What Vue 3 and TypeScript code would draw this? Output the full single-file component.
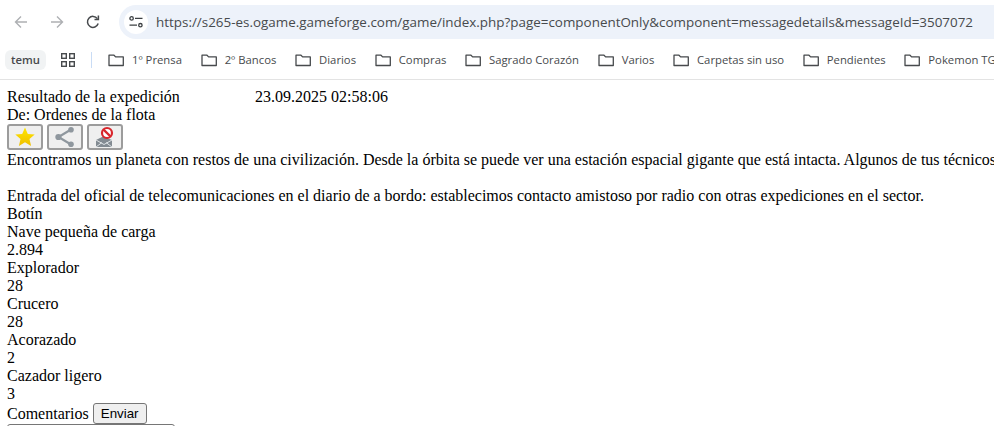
<template>
  <div class="browser">
    <!-- Toolbar -->
    <div class="toolbar">
      <button class="nav" aria-label="Atrás">
        <svg width="16" height="16" viewBox="0 0 16 16" fill="none" stroke="#aeb0b3" stroke-width="1.4">
          <path d="M14 8H2.5M8 2.5 2.5 8 8 13.5" />
        </svg>
      </button>
      <button class="nav" aria-label="Adelante">
        <svg width="16" height="16" viewBox="0 0 16 16" fill="none" stroke="#aeb0b3" stroke-width="1.4">
          <path d="M2 8h11.5M8 2.5 13.5 8 8 13.5" />
        </svg>
      </button>
      <button class="nav" aria-label="Recargar">
        <svg width="16" height="16" viewBox="0 0 16 16" fill="none" stroke="#474a4d" stroke-width="1.5">
          <path d="M13.2 9.6A5.5 5.5 0 1 1 12.4 4.6" />
          <path d="M13.4 1.6v3.9H9.5" />
        </svg>
      </button>
      <div class="omnibox">
        <span class="site-info">
          <svg width="16" height="16" viewBox="0 0 16 16" fill="none" stroke="#3c4043" stroke-width="1.3">
            <circle cx="3.6" cy="4.4" r="1.7" />
            <path d="M7 4.4h7.5M1.5 11.2H9" />
            <circle cx="12.4" cy="11.2" r="1.7" />
          </svg>
        </span>
        <span class="url">https://s265-es.ogame.gameforge.com/game/index.php?page=componentOnly&amp;component=messagedetails&amp;messageId=3507072</span>
      </div>
    </div>

    <!-- Bookmarks bar -->
    <div class="bookmarks">
      <span class="chip">temu</span>
      <svg class="apps" width="14" height="14" viewBox="0 0 14 14" fill="none" stroke="#474a4d" stroke-width="1.4">
        <rect x="0.7" y="0.7" width="4.6" height="4.6" />
        <rect x="8.7" y="0.7" width="4.6" height="4.6" />
        <rect x="0.7" y="8.7" width="4.6" height="4.6" />
        <rect x="8.7" y="8.7" width="4.6" height="4.6" />
      </svg>
      <span class="divider"></span>
      <span v-for="name in folders" :key="name" class="bookmark">
        <svg width="16" height="16" viewBox="0 0 16 16" fill="none" stroke="#474a4d" stroke-width="1.3">
          <path d="M1 3.2h5l1.6 1.7h7.7v8.6H1z" stroke-linejoin="round" />
        </svg>
        {{ name }}
      </span>
    </div>

    <!-- Page content -->
    <main class="page">
      <div class="subject">
        <span class="title">Resultado de la expedición</span>
        <span>23.09.2025 02:58:06</span>
      </div>
      <div>De: Ordenes de la flota</div>
      <div class="actions">
        <button class="action" aria-label="Favorito">
          <svg width="20" height="20" viewBox="0 0 20 20">
            <defs>
              <linearGradient id="gold" x1="0" y1="0" x2="0" y2="1">
                <stop offset="0" stop-color="#ffe600" />
                <stop offset="1" stop-color="#eebf00" />
              </linearGradient>
            </defs>
            <path fill="url(#gold)" d="M10 .5l2.8 6.4 6.9.6-5.2 4.5 1.6 6.9L10 15.3l-6.1 3.6 1.6-6.9L.3 7.5l6.9-.6z" />
          </svg>
        </button>
        <button class="action" aria-label="Compartir">
          <svg width="20" height="20" viewBox="0 0 20 20" fill="#8f979e" stroke="none">
            <path d="M16 2.5 3.5 10 16 17.5" fill="none" stroke="#8f979e" stroke-width="2.2" />
            <circle cx="16" cy="2.8" r="2.8" />
            <circle cx="3.4" cy="10" r="3.1" />
            <circle cx="16" cy="17.2" r="2.8" />
          </svg>
        </button>
        <button class="action" aria-label="Bloquear">
          <svg width="22" height="22" viewBox="0 0 22 22">
            <path d="M2 14 9 10.5l9 3.5V21H2z" fill="#838b92" />
            <path d="M2 14 10 18.5l8-4.5M2 21l6-4.5M18 21l-6-4.5" fill="none" stroke="#dfe3e6" stroke-width="1" />
            <circle cx="13" cy="7" r="5" fill="#fff" stroke="#d8262c" stroke-width="2.2" />
            <path d="M9.6 3.6 16.4 10.4" stroke="#d8262c" stroke-width="2.2" />
          </svg>
        </button>
      </div>
      <div>Encontramos un planeta con restos de una civilización. Desde la órbita se puede ver una estación espacial gigante que está intacta. Algunos de tus técnicos y pilotos se dirigieron a la estación.</div>
      <br />
      <div>Entrada del oficial de telecomunicaciones en el diario de a bordo: establecimos contacto amistoso por radio con otras expediciones en el sector.</div>
      <div>Botín</div>
      <template v-for="item in loot" :key="item.name">
        <div>{{ item.name }}</div>
        <div>{{ item.amount }}</div>
      </template>
      <div class="comments">
        <span>Comentarios</span>
        <button class="send">Enviar</button>
      </div>
      <textarea class="comment-box"></textarea>
    </main>
  </div>
</template>

<script setup lang="ts">
const folders: string[] = [
  "1º Prensa",
  "2º Bancos",
  "Diarios",
  "Compras",
  "Sagrado Corazón",
  "Varios",
  "Carpetas sin uso",
  "Pendientes",
  "Pokemon TGC",
];

const loot: { name: string; amount: string }[] = [
  { name: "Nave pequeña de carga", amount: "2.894" },
  { name: "Explorador", amount: "28" },
  { name: "Crucero", amount: "28" },
  { name: "Acorazado", amount: "2" },
  { name: "Cazador ligero", amount: "3" },
];
</script>

<style>
html,
body {
  margin: 0;
  height: 100%;
  overflow: hidden;
  background: #fff;
}
</style>

<style scoped>
.browser {
  width: 994px;
  height: 426px;
  overflow: hidden;
}

/* ── Toolbar ── */
.toolbar {
  height: 40px;
  display: flex;
  align-items: center;
  padding: 4px 0 0 5px;
  box-sizing: border-box;
  gap: 4px;
}

.nav {
  width: 32px;
  height: 32px;
  flex: none;
  display: flex;
  align-items: center;
  justify-content: center;
  padding: 0;
  border: none;
  background: none;
}

.omnibox {
  flex: 1;
  min-width: 0;
  height: 34px;
  margin-left: 6px;
  padding-left: 5px;
  display: flex;
  align-items: center;
  gap: 8px;
  background: #edf2fa;
  border-radius: 17px 0 0 17px;
}

.site-info {
  width: 24px;
  height: 24px;
  flex: none;
  display: flex;
  align-items: center;
  justify-content: center;
  background: #fff;
  border-radius: 50%;
}

.url {
  font-family: "Open Sans", sans-serif;
  font-size: 13.43px;
  color: #474a4d;
  white-space: nowrap;
}

/* ── Bookmarks ── */
.bookmarks {
  height: 40px;
  box-sizing: border-box;
  display: flex;
  align-items: center;
  padding: 0 0 0 5px;
  border-bottom: 1px solid #e3e3e3;
  font-family: "Open Sans", sans-serif;
  font-size: 11.3px;
  color: #474a4d;
  white-space: nowrap;
}

.chip {
  width: 41px;
  height: 20px;
  flex: none;
  line-height: 20px;
  text-align: center;
  font-weight: 600;
  background: #f1f3f4;
  border-radius: 6px;
}

.apps {
  margin-left: 15px;
  flex: none;
}

.divider {
  width: 1px;
  height: 16px;
  margin: 0 16px;
  background: #c9dcf5;
  flex: none;
}

.bookmark {
  flex: none;
  display: flex;
  align-items: center;
  gap: 8px;
  margin-right: 18.7px;
}

/* ── Page ── */
.page {
  padding: 8px 0 0 7px;
  font-family: "Liberation Serif", "Times New Roman", serif;
  font-size: 16px;
  line-height: 18px;
  color: #000;
  white-space: nowrap;
}

.subject {
  display: flex;
}

.title {
  width: 248px;
}

.actions {
  display: flex;
  gap: 4px;
  height: 27px;
}

.action {
  width: 36px;
  height: 26px;
  padding: 0;
  display: flex;
  align-items: center;
  justify-content: center;
  background: #efefef;
  border: 2px solid #9c9c9c;
  border-radius: 3px;
}

.comments {
  display: flex;
  align-items: center;
  gap: 4px;
  height: 21px;
}

.send {
  height: 21px;
  padding: 0 7px;
  font-family: "Liberation Sans", Arial, sans-serif;
  font-size: 13.333px;
  color: #000;
  background: #efefef;
  border: 1px solid #767676;
  border-radius: 3px;
}

.comment-box {
  display: block;
  width: 168px;
  height: 40px;
  margin: 0;
  padding: 2px;
  box-sizing: border-box;
  border: 1px solid #767676;
  border-radius: 3px;
}
</style>
